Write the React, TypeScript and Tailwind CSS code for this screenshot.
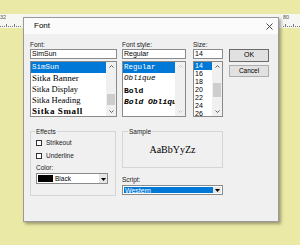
import React from 'react';

const sans = "font-['Liberation_Sans',Arial,sans-serif]";

function Chevron({ up, disabled }: { up?: boolean; disabled?: boolean }) {
  return (
    <svg width="5" height="3" viewBox="0 0 5 3" className="block">
      <polyline
        points={up ? '0.5,2.5 2.5,0.5 4.5,2.5' : '0.5,0.5 2.5,2.5 4.5,0.5'}
        fill="none"
        stroke={disabled ? '#c8c8c8' : '#606060'}
        strokeWidth="1"
      />
    </svg>
  );
}

function ScrollBar({ thumb, disabled }: { thumb?: string; disabled?: boolean }) {
  return (
    <div className="w-[10px] shrink-0 flex flex-col bg-[#f0f0f0]">
      <div className="h-[9px] flex items-center justify-center">
        <Chevron up disabled={disabled} />
      </div>
      <div className="flex-1">{thumb && <div className={`mx-[1px] bg-[#cdcdcd] ${thumb}`} />}</div>
      <div className="h-[9px] flex items-center justify-center">
        <Chevron disabled={disabled} />
      </div>
    </div>
  );
}

function DropArrow() {
  return (
    <svg width="5" height="4" viewBox="0 0 5 4" className="block">
      <polygon points="0,1 5,1 2.5,4" fill="#000" />
    </svg>
  );
}

type Item = { text: string; cls: string };

const fonts: Item[] = [
  { text: 'SimSun', cls: "font-['Liberation_Mono',monospace] text-[7.5px]" },
  { text: 'Sitka Banner', cls: "font-['Liberation_Serif',serif] text-[9px]" },
  { text: 'Sitka Display', cls: "font-['Liberation_Serif',serif] text-[8.5px]" },
  { text: 'Sitka Heading', cls: "font-['Liberation_Serif',serif] text-[8.5px]" },
  { text: 'Sitka Small', cls: "font-['Liberation_Serif',serif] text-[9px] font-bold tracking-[0.6px]" },
];

const styles: Item[] = [
  { text: 'Regular', cls: 'text-[7.5px]' },
  { text: 'Oblique', cls: 'text-[7.5px] italic' },
  { text: 'Bold', cls: 'text-[8px] font-bold' },
  { text: 'Bold Oblique', cls: 'text-[8px] font-bold italic' },
];

const sizes = ['14', '16', '18', '20', '22', '24', '26'];

function Label({ children }: { children: React.ReactNode }) {
  return <div className={`h-[9px] text-[6.5px] leading-[9px] text-[#222] ${sans}`}>{children}</div>;
}

function Field({ value }: { value: string }) {
  return (
    <div className={`h-[10px] border border-[#8a8a8a] bg-white pl-[1px] text-[7px] leading-[8px] text-black ${sans}`}>
      {value}
    </div>
  );
}

function Check({ label }: { label: string }) {
  return (
    <div className="h-[7px] flex items-center gap-[4px]">
      <div className="w-[6px] h-[6px] border border-[#333] bg-white" />
      <span className={`text-[6.5px] leading-[7px] text-[#222] ${sans}`}>{label}</span>
    </div>
  );
}

export default function App() {
  return (
    <div className="relative w-[300px] h-[245px] overflow-hidden bg-[#ebe9a6]">
      {/* ruler strip behind the dialog */}
      <div className="mt-[14px] h-[14px] bg-[#f6f6f2] flex justify-between">
        <div className="w-[23px]">
          <span className={`block text-[5.5px] leading-[6px] text-[#555] ${sans}`}>32</span>
          <svg width="23" height="6" className="block mt-[3px]">
            {Array.from({ length: 11 }).map((_, i) => (
              <rect key={i} x={i * 2} y={i % 4 === 3 ? 1 : 3} width="1" height={i % 4 === 3 ? 3 : 1} fill="#777" />
            ))}
          </svg>
        </div>
        <div className="w-[20px] pl-[3px]">
          <span className={`block text-[5.5px] leading-[6px] text-[#555] ${sans}`}>80</span>
          <svg width="19" height="6" className="block mt-[3px]">
            {Array.from({ length: 10 }).map((_, i) => (
              <rect key={i} x={i * 2} y={i % 4 === 1 ? 1 : 3} width="1" height={i % 4 === 1 ? 3 : 1} fill="#777" />
            ))}
          </svg>
        </div>
      </div>

      {/* Font dialog window */}
      <div className="absolute left-[23px] top-[17px] w-[256px] h-[205px] bg-[#f0f0f0] border border-[#9a9a9a] shadow-[2px_2px_3px_rgba(0,0,0,0.35)]">
        <div className="h-[16px] bg-[#fbfbfb] flex items-center justify-between pl-[10px] pr-[5px]">
          <span className={`text-[8px] text-black ${sans}`}>Font</span>
          <svg width="7" height="7" viewBox="0 0 7 7" className="block">
            <path d="M0.5 0.5 L6.5 6.5 M6.5 0.5 L0.5 6.5" stroke="#333" strokeWidth="0.9" />
          </svg>
        </div>

        <div className="pl-[6px] pt-[6px]">
          {/* top row */}
          <div className="flex items-start">
            <div className="w-[87px]">
              <Label>Font:</Label>
              <Field value="SimSun" />
              <div className="mt-[2px] h-[56px] border border-[#8a8a8a] bg-white flex">
                <div className="flex-1 min-w-0">
                  {fonts.map((f, i) => (
                    <div
                      key={f.text}
                      className={`h-[11px] pl-[1px] leading-[11px] whitespace-nowrap overflow-hidden ${f.cls} ${
                        i === 0 ? 'bg-[#0078d7] text-white' : 'text-black'
                      }`}
                    >
                      {f.text}
                    </div>
                  ))}
                </div>
                <ScrollBar thumb="mt-[23px] h-[11px]" />
              </div>
            </div>

            <div className="w-[64px] ml-[5px]">
              <Label>Font style:</Label>
              <Field value="Regular" />
              <div className="mt-[2px] h-[56px] border border-[#8a8a8a] bg-white flex">
                <div className="flex-1 min-w-0 font-['Liberation_Mono',monospace]">
                  {styles.map((s, i) => (
                    <div
                      key={s.text}
                      className={`h-[11.3px] pl-[1px] leading-[11px] whitespace-nowrap overflow-hidden ${s.cls} ${
                        i === 0 ? 'bg-[#0078d7] text-white' : 'text-black'
                      }`}
                    >
                      {s.text}
                    </div>
                  ))}
                </div>
                <ScrollBar disabled />
              </div>
            </div>

            <div className="w-[30px] ml-[7px]">
              <Label>Size:</Label>
              <Field value="14" />
              <div className="mt-[2px] h-[56px] border border-[#8a8a8a] bg-white flex overflow-hidden">
                <div className="flex-1 min-w-0">
                  {sizes.map((s, i) => (
                    <div
                      key={s}
                      className={`h-[8px] pl-[1px] text-[7px] leading-[8px] ${sans} ${
                        i === 0 ? 'bg-[#0078d7] text-white' : 'text-black'
                      }`}
                    >
                      {s}
                    </div>
                  ))}
                </div>
                <ScrollBar thumb="mt-[12px] h-[14px]" />
              </div>
            </div>

            <div className="w-[40px] ml-[6px] pt-[9px] flex flex-col gap-[3px]">
              <div className={`h-[13px] border border-[#6a6a6a] bg-[#e1e1e1] flex items-center justify-center text-[7px] text-black ${sans}`}>
                OK
              </div>
              <div className={`h-[12px] border border-[#adadad] bg-[#e1e1e1] flex items-center justify-center text-[6.5px] text-black ${sans}`}>
                Cancel
              </div>
            </div>
          </div>

          {/* bottom row */}
          <div className="flex items-start mt-[11px]">
            <fieldset className="w-[86px] h-[68px] border border-[#d5d5d5] pl-[5px]">
              <legend className={`ml-[-1px] px-[1px] text-[6.5px] leading-[7px] text-[#222] ${sans}`}>Effects</legend>
              <div className="pt-[4px]">
                <Check label="Strikeout" />
                <div className="mt-[6px]">
                  <Check label="Underline" />
                </div>
                <div className={`mt-[5px] h-[7px] text-[6.5px] leading-[7px] text-[#222] ${sans}`}>Color:</div>
                <div className="mt-[2px] w-[72px] h-[11px] border border-[#8a8a8a] bg-white flex items-center pl-[1px]">
                  <div className="w-[15px] h-[7px] bg-black" />
                  <span className={`ml-[2px] flex-1 text-[6.5px] text-black ${sans}`}>Black</span>
                  <div className="w-[8px] h-[9px] bg-[#e6e6e6] flex items-center justify-center">
                    <DropArrow />
                  </div>
                </div>
              </div>
            </fieldset>

            <div className="w-[101px] ml-[6px]">
              <fieldset className="h-[40px] border border-[#d5d5d5] pl-[5px]">
                <legend className={`px-[1px] text-[6.5px] leading-[7px] text-[#222] ${sans}`}>Sample</legend>
                <div className="h-[28px] flex items-center justify-center pr-[5px] font-['Liberation_Serif',serif] text-[10px] text-black">
                  AaBbYyZz
                </div>
              </fieldset>
              <div className={`mt-[8px] h-[7px] text-[6.5px] leading-[7px] text-[#222] ${sans}`}>Script:</div>
              <div className="mt-[2px] h-[10px] border border-[#8a8a8a] bg-white flex items-stretch p-[1px]">
                <div className={`flex-1 bg-[#0078d7] text-white text-[7px] leading-[7px] pl-[1px] ${sans}`}>Western</div>
                <div className="w-[8px] bg-[#e6e6e6] flex items-center justify-center">
                  <DropArrow />
                </div>
              </div>
            </div>
          </div>
        </div>
      </div>
    </div>
  );
}
